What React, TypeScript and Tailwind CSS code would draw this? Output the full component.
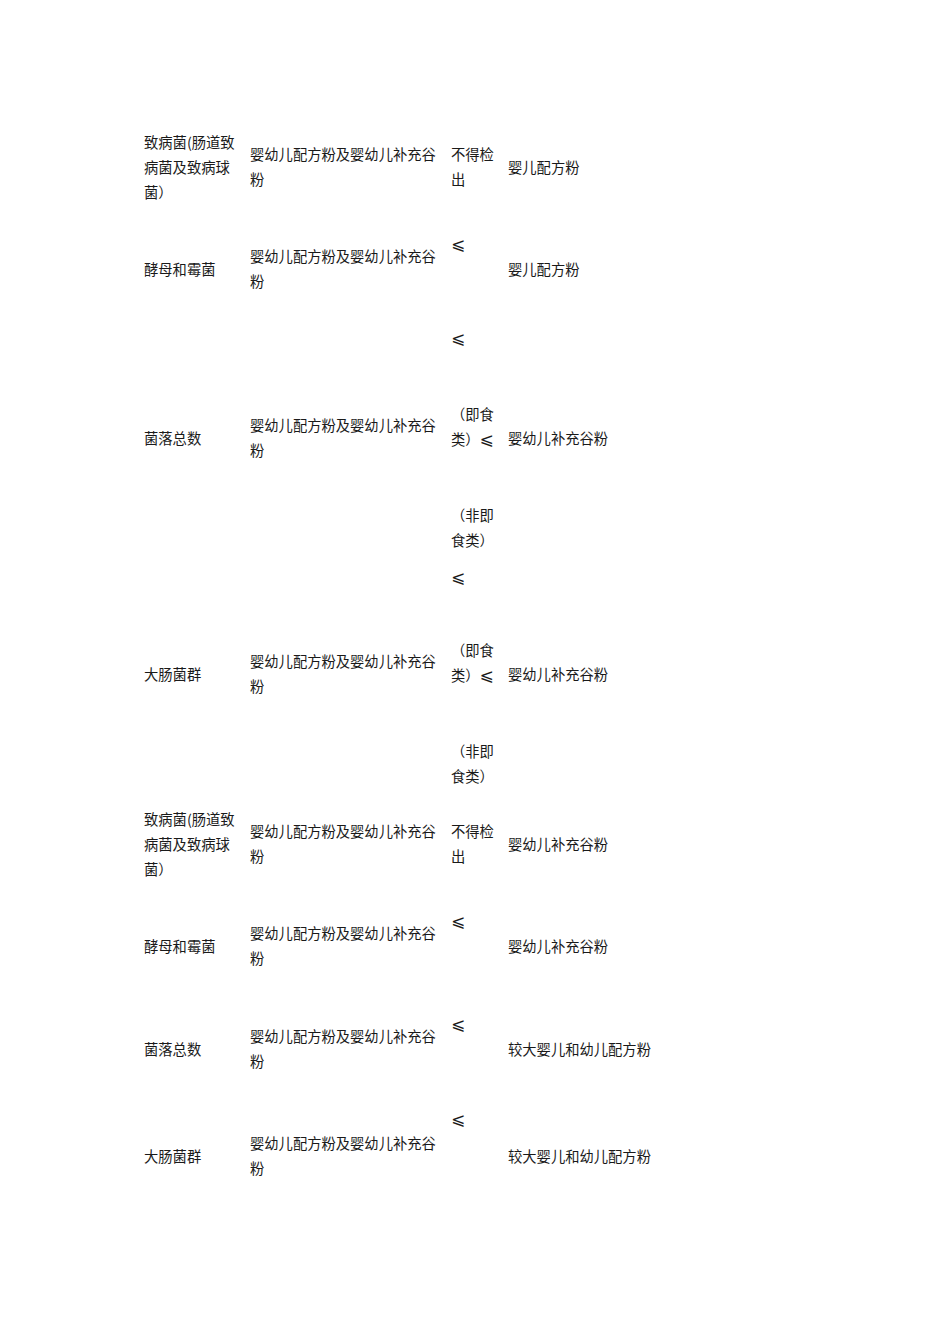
import React from "react";

type Row = {
  h: string;
  name: string[];
  scope: string[];
  limit: React.ReactNode;
  limitTop?: string;
  target: string;
};

const scope = ["婴幼儿配方粉及婴幼儿补充谷", "粉"];
const lines = (items: string[]) => items.map((t, i) => <div key={i}>{t}</div>);

// slanted "less than or equal", as in the source document
const Le = () => (
  <span className="text-[17px]" style={{ fontFamily: '"DejaVu Sans", "Noto Sans CJK SC", sans-serif' }}>
    ⩽
  </span>
);

const rows: Row[] = [
  {
    h: "h-[100px]",
    name: ["致病菌(肠道致", "病菌及致病球", "菌）"],
    scope,
    limit: lines(["不得检", "出"]),
    target: "婴儿配方粉",
  },
  {
    h: "h-[104px]",
    name: ["酵母和霉菌"],
    scope,
    limitTop: "pt-[15px]",
    limit: <div><Le /></div>,
    target: "婴儿配方粉",
  },
  {
    h: "h-[234px]",
    name: ["菌落总数"],
    scope,
    limitTop: "pt-[5px]",
    limit: (
      <>
        <div><Le /></div>
        <div className="mt-[50px]">（即食</div>
        <div>类）<Le /></div>
        <div className="mt-[50px]">（非即</div>
        <div>食类）</div>
        <div className="mt-[12px]"><Le /></div>
      </>
    ),
    target: "婴幼儿补充谷粉",
  },
  {
    h: "h-[238px]",
    name: ["大肠菌群"],
    scope,
    limitTop: "pt-[83px]",
    limit: (
      <>
        <div>（即食</div>
        <div>类）<Le /></div>
        <div className="mt-[50px]">（非即</div>
        <div>食类）</div>
      </>
    ),
    target: "婴幼儿补充谷粉",
  },
  {
    h: "h-[102px]",
    name: ["致病菌(肠道致", "病菌及致病球", "菌）"],
    scope,
    limit: lines(["不得检", "出"]),
    target: "婴幼儿补充谷粉",
  },
  {
    h: "h-[102px]",
    name: ["酵母和霉菌"],
    scope,
    limitTop: "pt-[14px]",
    limit: <div><Le /></div>,
    target: "婴幼儿补充谷粉",
  },
  {
    h: "h-[104px]",
    name: ["菌落总数"],
    scope,
    limitTop: "pt-[15px]",
    limit: <div><Le /></div>,
    target: "较大婴儿和幼儿配方粉",
  },
  {
    h: "h-[110px]",
    name: ["大肠菌群"],
    scope,
    limitTop: "pt-[6px]",
    limit: <div><Le /></div>,
    target: "较大婴儿和幼儿配方粉",
  },
];

export default function App() {
  return (
    <div
      className="min-h-[1344px] bg-white pt-[116px] pl-[144px] text-[14.3px] leading-[25px] text-[#1a1a1a]"
      style={{ fontFamily: '"Noto Sans CJK SC", "Liberation Serif", sans-serif' }}
    >
      {rows.map((r, i) => (
        <div key={i} className={`flex items-center ${r.h}`}>
          <div className="w-[106px] shrink-0">{lines(r.name)}</div>
          <div className="w-[201px] shrink-0">{lines(r.scope)}</div>
          <div className={`w-[57px] shrink-0 ${r.limitTop ? `self-start ${r.limitTop}` : ""}`}>
            {r.limit}
          </div>
          <div>{r.target}</div>
        </div>
      ))}
    </div>
  );
}
